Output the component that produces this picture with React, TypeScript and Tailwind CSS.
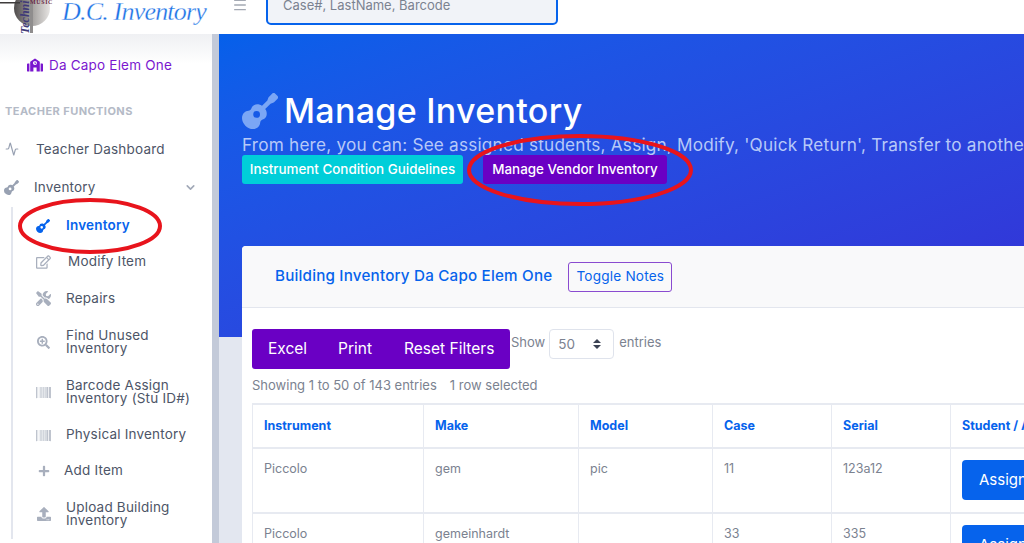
import React from 'react';
import { Activity, ChevronDown, Menu } from 'lucide-react';
import { FaBarcode, FaGuitar, FaPlus, FaRegEdit, FaSchool, FaSearchPlus, FaTools, FaUpload } from 'react-icons/fa';

const subItems = [
  { label: ['Modify Item'], icon: <FaRegEdit size={16} />, textClass: 'ml-[17px]', rowClass: 'h-[36px]' },
  { label: ['Repairs'], icon: <FaTools size={15} />, textClass: 'ml-[15px]', rowClass: 'h-[37px]' },
  { label: ['Find Unused', 'Inventory'], icon: <FaSearchPlus size={13} />, textClass: 'ml-[15px]', rowClass: 'h-[50px]' },
  { label: ['Barcode Assign', 'Inventory (Stu ID#)'], icon: <FaBarcode size={15} />, textClass: 'ml-[15px]', rowClass: 'h-[50px]' },
  { label: ['Physical Inventory'], icon: <FaBarcode size={15} />, textClass: 'ml-[15px]', rowClass: 'h-[36px]' },
  { label: ['Add Item'], icon: <FaPlus size={12} />, textClass: 'ml-[13px]', rowClass: 'h-[36px]' },
  { label: ['Upload Building', 'Inventory'], icon: <FaUpload size={14} />, textClass: 'ml-[15px]', rowClass: 'h-[50px]' },
];

const columns = [
  { name: 'Instrument', width: 'w-[171px]' },
  { name: 'Make', width: 'w-[155px]' },
  { name: 'Model', width: 'w-[134px]' },
  { name: 'Case', width: 'w-[119px]' },
  { name: 'Serial', width: 'w-[119px]' },
  { name: 'Student / Assign', width: 'w-[200px]' },
];

const rows = [
  ['Piccolo', 'gem', 'pic', '11', '123a12'],
  ['Piccolo', 'gemeinhardt', '', '33', '335'],
];

const Logo = () => (
  <div className="relative w-[60px] h-[34px] shrink-0 overflow-hidden">
    <svg width="60" height="34" viewBox="0 0 60 34" className="absolute left-0 top-0">
      <defs>
        <linearGradient id="disc" x1="0" x2="1">
          <stop offset="0" stopColor="#4f4c4c" />
          <stop offset="0.5" stopColor="#a3a09e" />
          <stop offset="1" stopColor="#e6e4e2" />
        </linearGradient>
      </defs>
      <circle cx="32" cy="8" r="18" fill="url(#disc)" />
      <rect x="30" y="0" width="3" height="33" fill="#8f8d8d" />
      <rect x="0" y="2" width="20" height="1.5" fill="#3f3c3c" />
    </svg>
    <span className="absolute left-[9px] top-[12px] w-[32px] h-[12px] -rotate-90 origin-center text-[12px] font-bold italic text-[#3f3a78] font-['Liberation_Serif',serif] leading-[12px] whitespace-nowrap">
      Techni
    </span>
    <span className="absolute left-[30px] top-0 text-[6px] font-bold tracking-[0.6px] text-[#6b2a48] font-['Liberation_Serif',serif] leading-[5px]">
      MUSIC
    </span>
  </div>
);

const Sidebar = () => (
  <aside className="w-[212px] shrink-0 h-full bg-gradient-to-b from-[#eff0f3] to-white to-[30px] text-[#4d5567] overflow-hidden">
    <div className="flex items-center pl-[27px] pt-[8px] h-[54px] text-[#7a17cf] text-[13.5px] tracking-[0.2px]">
      <FaSchool size={16} className="mr-[6px]" />
      Da Capo Elem One
    </div>
    <div className="pl-[5px] mt-[16px] text-[11px] font-bold tracking-[0.45px] text-[#b4bac6] leading-[14px] whitespace-nowrap">
      TEACHER FUNCTIONS
    </div>
    <div className="flex items-center h-[38px] pl-[5px] mt-[12px]">
      <Activity size={14} className="text-[#98a1b2]" />
      <span className="ml-[17px] text-[13.5px] tracking-[0.2px]">Teacher Dashboard</span>
    </div>
    <div className="flex items-center h-[38px] pl-[4px] pr-[15px]">
      <FaGuitar size={15} className="text-[#98a1b2]" />
      <span className="ml-[15px] text-[13.5px] tracking-[0.2px]">Inventory</span>
      <ChevronDown size={13} strokeWidth={3} className="ml-auto text-[#a2a9b8]" />
    </div>
    <div className="ml-[11px] mt-[1px] border-l-2 border-[#e3e6ee]">
      <div className="flex items-center h-[37px] pl-[23px] text-[#0663ec] font-semibold">
        <FaGuitar size={14} className="shrink-0" />
        <span className="ml-[16px] text-[13.5px] tracking-[0.2px]">Inventory</span>
      </div>
      {subItems.map((item) => (
        <div key={item.label[0]} className={`flex items-center pl-[23px] ${item.rowClass}`}>
          <span className="w-[15px] shrink-0 flex justify-center text-[#a8afbd]">{item.icon}</span>
          <span className={`${item.textClass} text-[13.5px] leading-[13.5px] tracking-[0.2px]`}>
            {item.label.map((line) => (
              <span key={line} className="block whitespace-nowrap">{line}</span>
            ))}
          </span>
        </div>
      ))}
    </div>
  </aside>
);

const Main = () => (
  <main className="flex-1 min-w-0 h-full overflow-hidden bg-[#e3e7f0]">
    <section className="h-[303px] bg-gradient-to-br from-[#0560ea] to-[#3430d6] pl-[23px] pt-[57px]">
      <div className="flex items-center h-[40px] text-white">
        <FaGuitar size={36} className="text-[#7ba6f5] shrink-0" />
        <h1 className="ml-[6px] text-[34px] font-medium tracking-[0.3px] leading-[40px] whitespace-nowrap">
          Manage Inventory
        </h1>
      </div>
      <p className="mt-[4px] text-[17.2px] leading-[20px] text-[#b7c9f8] whitespace-nowrap tracking-[0.2px]">
        From here, you can: See assigned students, Assign, Modify, 'Quick Return', Transfer to another building
      </p>
      <div className="flex items-center h-[29px]">
        <button className="w-[221px] h-[29px] rounded-[3px] bg-[#00ced9] text-white text-[13.4px] font-medium whitespace-nowrap">
          Instrument Condition Guidelines
        </button>
        <button className="w-[184px] h-[29px] ml-[20px] rounded-[3px] bg-[#6a00c4] text-white text-[13.4px] font-medium whitespace-nowrap">
          Manage Vendor Inventory
        </button>
      </div>
    </section>

    <section className="-mt-[91px] ml-[23px] w-[1000px] bg-white rounded-t-[4px]">
      <div className="h-[62px] flex items-center pl-[33px] bg-[#f9f9fa] border-b border-[#e3e6ee] rounded-t-[4px]">
        <h2 className="text-[15.2px] font-medium text-[#0663ec] tracking-[0.2px]">
          Building Inventory Da Capo Elem One
        </h2>
        <button className="ml-[16px] w-[104px] h-[30px] rounded-[3px] border border-[#8a4bd0] text-[#0663ec] text-[13.6px] tracking-[0.2px]">
          Toggle Notes
        </button>
      </div>

      <div className="px-[10px] pt-[21px]">
        <div className="flex items-start">
          <div className="flex items-center w-[258px] h-[40px] rounded-[3px] bg-[#6a00c4] text-white text-[15.5px] pl-[16px]">
            <span>Excel</span>
            <span className="ml-[31px]">Print</span>
            <span className="ml-[32px]">Reset Filters</span>
          </div>
          <span className="ml-px mt-[5px] text-[13px] leading-[16px] text-[#7b8290]">Show</span>
          <div className="ml-[4px] flex items-center justify-between w-[65px] h-[30px] rounded-[4px] border border-[#dfe3ec] pl-[8px] pr-[12px] text-[13.5px] text-[#7b8290]">
            50
            <span className="flex flex-col gap-[2px]">
              <span className="w-0 h-0 border-x-[4px] border-x-transparent border-b-[4px] border-b-[#3c4354]" />
              <span className="w-0 h-0 border-x-[4px] border-x-transparent border-t-[4px] border-t-[#3c4354]" />
            </span>
          </div>
          <span className="ml-[5px] mt-[5px] text-[13px] leading-[16px] text-[#7b8290]">entries</span>
        </div>
        <div className="mt-[8px] text-[13px] leading-[16px] text-[#7b8290] whitespace-nowrap">
          Showing 1 to 50 of 143 entries<span className="ml-[13px]">1 row selected</span>
        </div>

        <div className="mt-[10px] border-t-2 border-[#e7eaf1]">
          <div className="flex h-[44px] border-b-2 border-[#e7eaf1]">
            {columns.map((col) => (
              <div
                key={col.name}
                className={`${col.width} shrink-0 border-l border-[#e7eaf1] pl-[11px] flex items-center text-[12.5px] font-bold text-[#0663ec] whitespace-nowrap`}
              >
                {col.name}
              </div>
            ))}
          </div>
          {rows.map((row) => (
            <div key={row[4]} className="flex h-[65px] border-b-2 border-[#e7eaf1]">
              {row.map((cell, i) => (
                <div
                  key={i}
                  className={`${columns[i].width} shrink-0 border-l border-[#e7eaf1] pl-[11px] pt-[11px] text-[12.5px] leading-[18px] text-[#7b8290]`}
                >
                  {cell}
                </div>
              ))}
              <div className={`${columns[5].width} shrink-0 border-l border-[#e7eaf1] pl-[11px] pt-[11px]`}>
                <button className="w-[120px] h-[40px] rounded-[4px] bg-[#0663ec] text-white text-[15px] text-left pl-[17px]">
                  Assign
                </button>
              </div>
            </div>
          ))}
        </div>
      </div>
    </section>
  </main>
);

const App = () => {
  return (
    <div className="relative w-[1024px] h-[543px] overflow-hidden bg-white font-['Inter',sans-serif]">
      <header className="h-[34px] flex items-start bg-white overflow-hidden">
        <Logo />
        <div className="h-[34px] w-[150px] shrink-0 -mt-[5px] pl-[2px] text-[26px] leading-[34px] italic text-[#1c72e6] font-['Liberation_Serif',serif] whitespace-nowrap tracking-[-0.8px] [-webkit-text-stroke:0.3px_white]">
          D.C. Inventory
        </div>
        <Menu size={16} strokeWidth={2} className="ml-[22px] text-[#a4a9b3] -mt-[3px] shrink-0" />
        <div className="ml-[18px] w-[292px] h-[28px] -mt-[3px] rounded-b-[5px] border-2 border-[#0663ec] bg-[#f1f3f8] pl-[15px] text-[13px] leading-[13px] text-[#7b8290] flex items-start">
          Case#, LastName, Barcode
        </div>
      </header>

      <div className="flex h-[509px]">
        <Sidebar />
        <div className="w-[7px] shrink-0 bg-[#c3cad9]" />
        <Main />
      </div>

      {/* red marker circles drawn over the screenshot */}
      <svg width="1024" height="543" className="absolute left-0 top-0 pointer-events-none">
        <ellipse cx="90" cy="226" rx="70" ry="26" fill="none" stroke="#e8141c" strokeWidth="4" />
        <ellipse cx="580" cy="170" rx="111" ry="34" fill="none" stroke="#e8141c" strokeWidth="4" />
      </svg>
    </div>
  );
};

export default App;
